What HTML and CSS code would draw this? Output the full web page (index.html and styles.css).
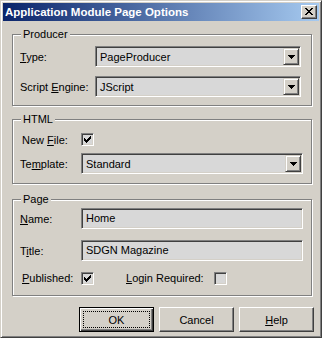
FILE: index.html
```html
<!DOCTYPE html>
<html lang="en">
<head>
    <meta charset="UTF-8">
    <title>Application Module Page Options</title>
    <link rel="stylesheet" href="styles.css">
</head>
<body>
    <div class="window">
        <div class="titlebar">
            <span class="title">Application Module Page Options</span>
            <span class="close-btn">
                <svg width="8" height="7" viewBox="0 0 8 7" shape-rendering="crispEdges">
                    <path d="M0 0h2v1h-2z M6 0h2v1h-2z M1 1h2v1h-2z M5 1h2v1h-2z M2 2h4v1h-4z M3 3h2v1h-2z M2 4h4v1h-4z M1 5h2v1h-2z M5 5h2v1h-2z M0 6h2v1h-2z M6 6h2v1h-2z" fill="#000"/>
                </svg>
            </span>
        </div>

        <div class="group group-producer">
            <span class="group-label">Producer</span>
            <div class="rows wide">
                <label><u>T</u>ype:</label>
                <div class="combo">
                    <span class="combo-text">PageProducer</span>
                    <span class="combo-btn"><svg width="7" height="4" viewBox="0 0 7 4" shape-rendering="crispEdges"><path d="M0 0h7v1h-7z M1 1h5v1h-5z M2 2h3v1h-3z M3 3h1v1h-1z" fill="#000"/></svg></span>
                </div>
                <label>Script <u>E</u>ngine:</label>
                <div class="combo">
                    <span class="combo-text">JScript</span>
                    <span class="combo-btn"><svg width="7" height="4" viewBox="0 0 7 4" shape-rendering="crispEdges"><path d="M0 0h7v1h-7z M1 1h5v1h-5z M2 2h3v1h-3z M3 3h1v1h-1z" fill="#000"/></svg></span>
                </div>
            </div>
        </div>

        <div class="group group-html">
            <span class="group-label">HTML</span>
            <div class="rows">
                <label class="shift">New <u>F</u>ile:</label>
                <div class="check-line">
                    <span class="checkbox"><svg width="9" height="9" viewBox="0 0 9 9" shape-rendering="crispEdges"><path d="M1 3h1v3h-1z M2 4h1v3h-1z M3 5h1v3h-1z M4 4h1v3h-1z M5 3h1v3h-1z M6 2h1v3h-1z M7 1h1v3h-1z" fill="#000"/></svg></span>
                </div>
                <label>Te<u>m</u>plate:</label>
                <div class="combo">
                    <span class="combo-text">Standard</span>
                    <span class="combo-btn"><svg width="7" height="4" viewBox="0 0 7 4" shape-rendering="crispEdges"><path d="M0 0h7v1h-7z M1 1h5v1h-5z M2 2h3v1h-3z M3 3h1v1h-1z" fill="#000"/></svg></span>
                </div>
            </div>
        </div>

        <div class="group group-page">
            <span class="group-label">Page</span>
            <div class="rows">
                <label><u>N</u>ame:</label>
                <div class="edit">Home</div>
                <label>T<u>i</u>tle:</label>
                <div class="edit">SDGN Magazine</div>
                <label class="shift"><u>P</u>ublished:</label>
                <div class="check-line">
                    <span class="checkbox"><svg width="9" height="9" viewBox="0 0 9 9" shape-rendering="crispEdges"><path d="M1 3h1v3h-1z M2 4h1v3h-1z M3 5h1v3h-1z M4 4h1v3h-1z M5 3h1v3h-1z M6 2h1v3h-1z M7 1h1v3h-1z" fill="#000"/></svg></span>
                    <label class="login-label"><u>L</u>ogin Required:</label>
                    <span class="checkbox"></span>
                </div>
            </div>
        </div>

        <div class="buttons">
            <button class="btn btn-default"><span class="focus">OK</span></button>
            <button class="btn">Cancel</button>
            <button class="btn"><u>H</u>elp</button>
        </div>
    </div>
</body>
</html>
```

FILE: styles.css
```css
body {
    margin: 0;
    font-family: "Liberation Sans", Arial, sans-serif;
    font-size: 11px;
    color: #000;
    background: #d4d0c8;
}

.window {
    width: 322px;
    height: 338px;
    box-sizing: border-box;
    padding: 2px;
    background: #d4d0c8;
    border: 1px solid;
    border-color: #d4d0c8 #404040 #404040 #d4d0c8;
    box-shadow: inset 1px 1px #fff, inset -1px -1px #808080;
}

.titlebar {
    height: 18px;
    display: flex;
    align-items: center;
    justify-content: space-between;
    background: linear-gradient(to right, #0a246a, #a6caf0);
    padding: 0 2px;
}

.title {
    color: #fff;
    font-weight: bold;
    font-size: 11.5px;
}

.close-btn {
    width: 16px;
    height: 14px;
    box-sizing: border-box;
    display: flex;
    align-items: center;
    justify-content: center;
    background: #d4d0c8;
    border: 1px solid;
    border-color: #fff #404040 #404040 #fff;
    box-shadow: inset -1px -1px #808080;
    padding-bottom: 1px;
}

/* group boxes */
.group {
    position: relative;
    margin: 0 7px 0 9px;
    border: 1px solid #808080;
    box-shadow: inset 1px 1px #fff, 1px 1px #fff;
}

.group-producer {
    margin-top: 13px;
    padding: 11px 10px 8px 7px;
}

.group-html {
    margin-top: 13px;
    padding: 13px 8px 9px 7px;
}

.group-page {
    margin-top: 15px;
    padding: 8px 8px 10px 7px;
}

.group-label {
    position: absolute;
    top: -7px;
    left: 8px;
    padding: 0 2px;
    line-height: 13px;
    background: #d4d0c8;
}

.rows {
    display: grid;
    grid-template-columns: 61px 1fr;
    align-items: center;
}

.rows.wide {
    grid-template-columns: 75px 1fr;
    row-gap: 9px;
}

.group-html .rows {
    row-gap: 7px;
}

.group-page .rows {
    grid-template-rows: 21px 21px 13px;
    row-gap: 11px;
}

.group-page .rows > :nth-child(5),
.group-page .rows > :nth-child(6) {
    margin-top: -1px;
}

label.shift {
    padding-left: 2px;
}

/* combo boxes and edits */
.combo,
.edit {
    height: 21px;
    box-sizing: border-box;
    border: 1px solid;
    border-color: #808080 #fff #fff #808080;
    box-shadow: inset 1px 1px #404040, inset -1px -1px #d4d0c8;
    background: #d8d8d8;
}

.combo {
    display: flex;
    align-items: center;
    padding: 1px 1px 1px 2px;
}

.combo-text {
    flex: 1;
    padding-left: 2px;
}

.combo-btn {
    width: 16px;
    height: 17px;
    box-sizing: border-box;
    display: flex;
    align-items: center;
    justify-content: center;
    background: #d4d0c8;
    border: 1px solid;
    border-color: #d4d0c8 #404040 #404040 #d4d0c8;
    box-shadow: inset 1px 1px #fff, inset -1px -1px #808080;
}

.edit {
    line-height: 19px;
    padding-left: 4px;
}

/* check boxes */
.check-line {
    display: flex;
    align-items: center;
    height: 13px;
}

.checkbox {
    width: 13px;
    height: 13px;
    box-sizing: border-box;
    display: flex;
    align-items: center;
    justify-content: center;
    border: 1px solid;
    border-color: #808080 #fff #fff #808080;
    box-shadow: inset 1px 1px #404040, inset -1px -1px #d4d0c8;
    background: #d8d8d8;
}

.login-label {
    margin: 0 10px 0 32px;
}

/* buttons */
.buttons {
    display: flex;
    justify-content: flex-end;
    gap: 5px;
    margin-top: 11px;
    padding-right: 5px;
}

.btn {
    width: 75px;
    height: 25px;
    box-sizing: border-box;
    padding: 0;
    font-family: inherit;
    font-size: 11px;
    color: #000;
    background: #d4d0c8;
    border: 1px solid;
    border-color: #fff #404040 #404040 #fff;
    box-shadow: inset -1px -1px #808080;
}

.btn-default {
    border-color: #000;
    box-shadow: inset 1px 1px #fff, inset -1px -1px #404040, inset -2px -2px #808080;
    padding: 3px;
}

.focus {
    display: flex;
    align-items: center;
    justify-content: center;
    height: 100%;
    border: 1px dotted #000;
    box-sizing: border-box;
}
```
